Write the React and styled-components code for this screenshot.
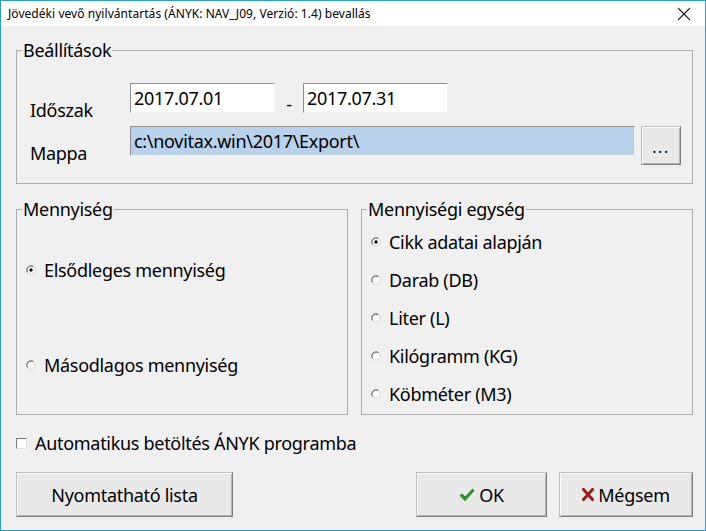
import React from "react";
import styled, { createGlobalStyle } from "styled-components";

const Global = createGlobalStyle`
  html, body { margin: 0; padding: 0; background: #f0f0f0; }
  * { box-sizing: border-box; }
`;

const FONT = `"Noto Sans", "Open Sans", "Liberation Sans", sans-serif`;

const Window = styled.div`
  width: 706px;
  height: 531px;
  border: 1px solid #2a9bd0;
  background: #f0f0f0;
  font-family: ${FONT};
  color: #000;
  display: flex;
  flex-direction: column;
  letter-spacing: -0.3px;
`;

const TitleBar = styled.div`
  height: 25px;
  background: #fff;
  display: flex;
  align-items: center;
  justify-content: space-between;
  padding: 0 14px 0 7px;
`;

const Title = styled.span`
  font-size: 12px;
  line-height: 16px;
  letter-spacing: 0.05px;
`;

const CloseIcon = styled.svg`
  width: 14px;
  height: 14px;
  display: block;
`;

const Body = styled.div`
  flex: 1;
  padding: 14px 12px 0 15px;
  display: flex;
  flex-direction: column;
`;

const Group = styled.fieldset`
  margin: 0;
  padding: 0;
  min-width: 0;
  border: 1px solid #acacac;
  flex: ${(p) => (p.$grow ? "1 1 0" : "none")};
  display: block;
`;

const Legend = styled.legend`
  margin-left: 5px;
  padding: 0 1px;
  font-size: 18px;
  line-height: 20px;
`;

const SettingsInner = styled.div`
  padding: 23px 0 18px 13px;
  display: flex;
  flex-direction: column;
  gap: 13px;
`;

const FieldRow = styled.div`
  display: flex;
  align-items: flex-start;
  height: ${(p) => p.$h}px;
`;

const FieldLabel = styled.span`
  width: 100px;
  padding-top: 17px;
  font-size: 18px;
  line-height: 20px;
`;

const TextBox = styled.div`
  width: ${(p) => p.$w}px;
  height: 30px;
  background: ${(p) => (p.$selected ? "#b9d1ea" : "#fff")};
  border: 1px solid;
  border-color: #8f8f8f #f4f4f4 #f4f4f4 #8f8f8f;
  padding: 0 3px;
  font-size: 18px;
  line-height: 28px;
  white-space: nowrap;
  overflow: hidden;
`;

const Dash = styled.span`
  width: 28px;
  text-align: center;
  padding-top: 11px;
  font-size: 18px;
  line-height: 20px;
`;

const Button = styled.button`
  font-family: ${FONT};
  font-size: 18px;
  letter-spacing: -0.3px;
  color: #000;
  width: ${(p) => p.$w}px;
  height: ${(p) => p.$h}px;
  margin: 0;
  padding: 0;
  background: #e9e9e9;
  border: 1px solid;
  border-color: #bdbdbd #7f7f7f #7f7f7f #bdbdbd;
  box-shadow: inset 1px 1px 0 #fff, inset -1px -1px 0 #b4b4b4;
  display: flex;
  align-items: center;
  justify-content: center;
  gap: 4px;
  margin-left: ${(p) => p.$ml || 0}px;
`;

const BrowseButton = styled(Button)`
  align-items: flex-end;
  padding-bottom: 9px;
  font-size: 16px;
  line-height: 16px;
  letter-spacing: 1.5px;
`;

const GroupsRow = styled.div`
  display: flex;
  gap: 13px;
  margin-top: 15px;
  align-items: stretch;
`;

const QtyInner = styled.div`
  display: flex;
  flex-direction: column;
  gap: 75px;
  padding-top: 41px;
`;

const UnitInner = styled.div`
  display: flex;
  flex-direction: column;
  padding: 4px 0 1px;
`;

const OptionRow = styled.label`
  display: flex;
  align-items: center;
  height: ${(p) => p.$h}px;
  padding-left: 9px;
  gap: 8px;
  font-size: 18px;
  line-height: 20px;
`;

const RadioIcon = styled.svg`
  width: 10px;
  height: 10px;
  display: block;
  flex: none;
`;

const CheckRow = styled.label`
  display: flex;
  align-items: center;
  gap: 8px;
  height: 20px;
  margin-top: 18px;
  font-size: 18px;
  line-height: 20px;
`;

const CheckBox = styled.span`
  width: 11px;
  height: 11px;
  background: #fff;
  border: 1px solid;
  border-color: #7a7a7a #e2e2e2 #e2e2e2 #7a7a7a;
  flex: none;
`;

const ButtonRow = styled.div`
  display: flex;
  align-items: center;
  margin-top: 19px;
`;

const Spacer = styled.div`
  flex: 1;
`;

const IconSvg = styled.svg`
  display: block;
  flex: none;
`;

function Radio({ checked }) {
  return (
    <RadioIcon viewBox="0 0 10 10">
      <circle cx="5" cy="5" r="4.2" fill="#ffffff" stroke="#d4d4d4" strokeWidth="1" />
      <path d="M1.6 7.4 A4.2 4.2 0 0 1 7.4 1.6" fill="none" stroke="#6f6f6f" strokeWidth="1.1" />
      {checked && <circle cx="5" cy="5" r="1.7" fill="#000" />}
    </RadioIcon>
  );
}

function CheckMark() {
  return (
    <IconSvg width="16" height="14" viewBox="0 0 16 14">
      <path d="M1 7.5 L3 5.8 L6 9 L13.5 1 L15.2 2.6 L6 12.8 Z" fill="#2f9a2b" stroke="#1d6a1a" strokeWidth="0.7" strokeLinejoin="round" />
    </IconSvg>
  );
}

function CrossMark() {
  return (
    <IconSvg width="12" height="13" viewBox="0 0 12 13">
      <path d="M1.5 1.5 L10.5 11.5 M10.5 1.5 L1.5 11.5" stroke="#9d1c1c" strokeWidth="3" strokeLinecap="square" />
    </IconSvg>
  );
}

export default function App() {
  return (
    <>
      <Global />
      <Window>
        <TitleBar>
          <Title>Jövedéki vevő nyilvántartás (ÁNYK: NAV_J09, Verzió: 1.4) bevallás</Title>
          <CloseIcon viewBox="0 0 14 14">
            <path d="M1 1 L13 13 M13 1 L1 13" stroke="#222" strokeWidth="1.1" />
          </CloseIcon>
        </TitleBar>
        <Body>
          <Group>
            <Legend>Beállítások</Legend>
            <SettingsInner>
              <FieldRow $h={30}>
                <FieldLabel>Időszak</FieldLabel>
                <TextBox $w={145}>2017.07.01</TextBox>
                <Dash>-</Dash>
                <TextBox $w={145}>2017.07.31</TextBox>
              </FieldRow>
              <FieldRow $h={39}>
                <FieldLabel>Mappa</FieldLabel>
                <TextBox $w={505} $selected>c:\novitax.win\2017\Export\</TextBox>
                <BrowseButton $w={40} $h={39} $ml={6}>...</BrowseButton>
              </FieldRow>
            </SettingsInner>
          </Group>

          <GroupsRow>
            <Group $grow>
              <Legend>Mennyiség</Legend>
              <QtyInner>
                <OptionRow $h={20}><Radio checked />Elsődleges mennyiség</OptionRow>
                <OptionRow $h={20}><Radio />Másodlagos mennyiség</OptionRow>
              </QtyInner>
            </Group>
            <Group $grow>
              <Legend>Mennyiségi egység</Legend>
              <UnitInner>
                <OptionRow $h={38}><Radio checked />Cikk adatai alapján</OptionRow>
                <OptionRow $h={38}><Radio />Darab (DB)</OptionRow>
                <OptionRow $h={38}><Radio />Liter (L)</OptionRow>
                <OptionRow $h={38}><Radio />Kilógramm (KG)</OptionRow>
                <OptionRow $h={38}><Radio />Köbméter (M3)</OptionRow>
              </UnitInner>
            </Group>
          </GroupsRow>

          <CheckRow>
            <CheckBox />
            Automatikus betöltés ÁNYK programba
          </CheckRow>

          <ButtonRow>
            <Button $w={217} $h={45}>Nyomtatható lista</Button>
            <Spacer />
            <Button $w={131} $h={45}><CheckMark />OK</Button>
            <Button $w={134} $h={45} $ml={12}><CrossMark />Mégsem</Button>
          </ButtonRow>
        </Body>
      </Window>
    </>
  );
}
